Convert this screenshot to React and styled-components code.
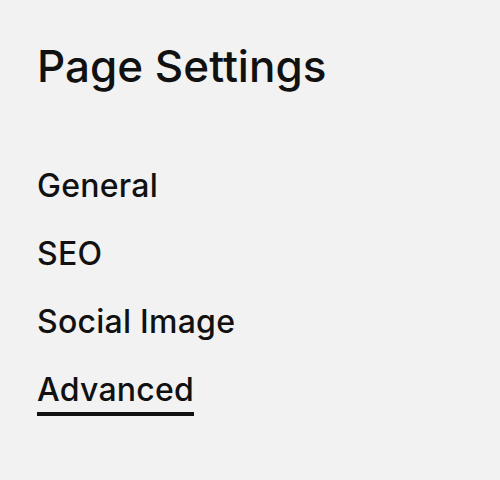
import React from "react";
import styled, { createGlobalStyle } from "styled-components";

const Global = createGlobalStyle`
  html, body { margin: 0; padding: 0; background: #f2f2f2; }
  body { font-family: Inter, "Noto Sans", sans-serif; color: #111; }
`;

const Page = styled.div`
  width: 500px;
  height: 480px;
  box-sizing: border-box;
  padding: 42px 37px 0;
  background: #f2f2f2;
`;

const Title = styled.h1`
  margin: 0;
  font-size: 44px;
  font-weight: 500;
  line-height: 48px;
  color: #111;
`;

const Nav = styled.nav`
  display: flex;
  flex-direction: column;
  align-items: flex-start;
  gap: 32px;
  margin-top: 78px;
`;

const Item = styled.a`
  font-size: 32px;
  font-weight: 500;
  line-height: 36px;
  letter-spacing: 0.25px;
  color: #111;
  text-decoration: none;
  cursor: pointer;
  ${(p) =>
    p.$active &&
    `
    padding-bottom: 4px;
    border-bottom: 4px solid #111;
    margin-bottom: -8px;
  `}
`;

const items = ["General", "SEO", "Social Image", "Advanced"];

export default function App() {
  return (
    <>
      <Global />
      <Page>
        <Title>Page Settings</Title>
        <Nav>
          {items.map((t) => (
            <Item key={t} $active={t === "Advanced"}>
              {t}
            </Item>
          ))}
        </Nav>
      </Page>
    </>
  );
}
